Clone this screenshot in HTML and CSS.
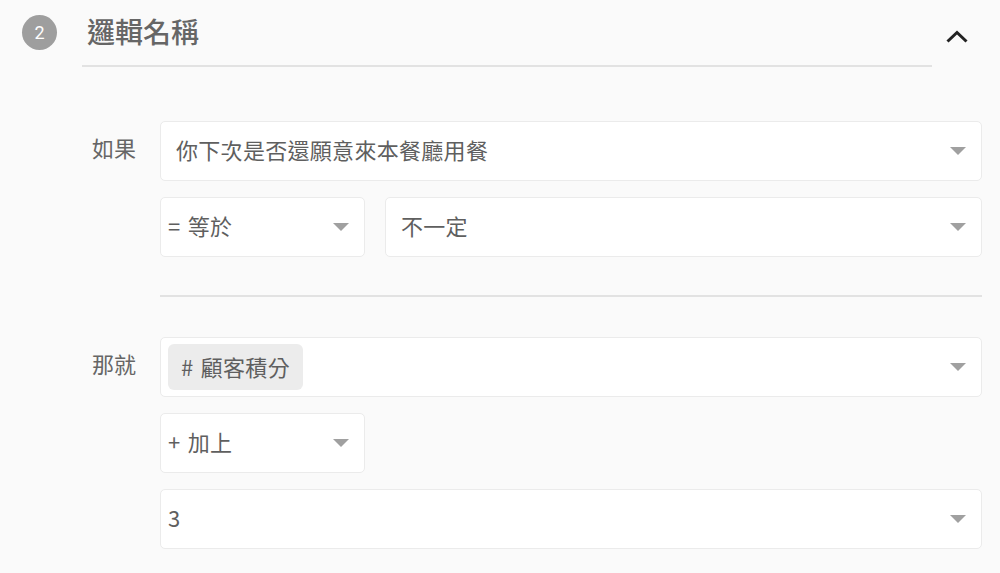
FILE: index.html
```html
<!DOCTYPE html>
<html>
<head>
    <meta charset="utf-8">
    <title>邏輯名稱</title>
    <link rel="stylesheet" href="styles.css">
</head>
<body>
    <div class="step">
        <div class="step-head">
            <div class="step-num">2</div>
            <div class="step-title">邏輯名稱</div>
            <svg class="chevron" width="24" height="15" viewBox="0 0 24 15">
                <polyline points="2.5,12.5 12,3.5 21.5,12.5" fill="none" stroke="#222" stroke-width="3"/>
            </svg>
        </div>

        <div class="rule rule-if">
            <div class="rule-label">如果</div>
            <div class="rule-body">
                <div class="field">
                    <span class="field-text">你下次是否還願意來本餐廳用餐</span>
                    <span class="caret"></span>
                </div>
                <div class="field-row">
                    <div class="field field-op">
                        <span class="field-text">= 等於</span>
                        <span class="caret"></span>
                    </div>
                    <div class="field field-grow">
                        <span class="field-text">不一定</span>
                        <span class="caret"></span>
                    </div>
                </div>
            </div>
        </div>

        <div class="divider"></div>

        <div class="rule">
            <div class="rule-label">那就</div>
            <div class="rule-body">
                <div class="field field-tight">
                    <span class="chip"># 顧客積分</span>
                    <span class="caret"></span>
                </div>
                <div class="field field-op">
                    <span class="field-text">+ 加上</span>
                    <span class="caret"></span>
                </div>
                <div class="field field-tight">
                    <span class="field-text">3</span>
                    <span class="caret"></span>
                </div>
            </div>
        </div>
    </div>
</body>
</html>
```

FILE: styles.css
```css
body {
    margin: 0;
    background-color: #fafafa;
    font-family: "Noto Sans CJK TC", sans-serif;
    color: #666;
}
.step {
    width: 1000px;
    padding-bottom: 23px;
}
.step-head {
    display: flex;
    align-items: flex-start;
}
.step-num {
    width: 35px;
    height: 35px;
    margin: 15px 25px 0 22px;
    border-radius: 50%;
    background-color: #9e9e9e;
    color: #fff;
    font-family: Roboto, sans-serif;
    font-size: 18px;
    line-height: 35px;
    text-align: center;
}
.step-title {
    width: 845px;
    height: 54px;
    padding: 11px 0 0 5px;
    border-bottom: 2px solid #e2e2e2;
    font-size: 28px;
    line-height: 40px;
    color: #666;
    font-weight: 500;
}
.chevron {
    margin: 29px 0 0 13px;
}
.rule {
    display: flex;
    padding-left: 92px;
}
.rule-if {
    margin-top: 54px;
}
.rule-label {
    width: 68px;
    font-size: 22px;
    line-height: 52px;
    color: #666;
}
.rule-body {
    width: 822px;
    display: flex;
    flex-direction: column;
    gap: 16px;
}
.field-row {
    display: flex;
    gap: 20px;
}
.field {
    box-sizing: border-box;
    height: 60px;
    display: flex;
    align-items: center;
    justify-content: space-between;
    padding: 0 15px 0 15px;
    background-color: #fff;
    border: 1px solid #ebebeb;
    border-radius: 5px;
    font-size: 22px;
    letter-spacing: 0.3px;
    word-spacing: 2px;
    color: #5f5f5f;
}
.field-text {
    margin-bottom: 4px;
}
.field-op {
    width: 205px;
    padding: 0 15px 0 7px;
}
.field-grow {
    flex: 1;
}
.field-tight {
    padding-left: 7px;
}
.chip {
    height: 46px;
    line-height: 44px;
    padding: 0 13px 2px;
    box-sizing: border-box;
    border-radius: 6px;
    background-color: #ececec;
}
.caret {
    width: 0;
    height: 0;
    border-left: 8px solid transparent;
    border-right: 8px solid transparent;
    border-top: 8px solid #a0a0a0;
}
.divider {
    height: 2px;
    margin: 38px 18px 40px 160px;
    background-color: #e2e2e2;
}
```
